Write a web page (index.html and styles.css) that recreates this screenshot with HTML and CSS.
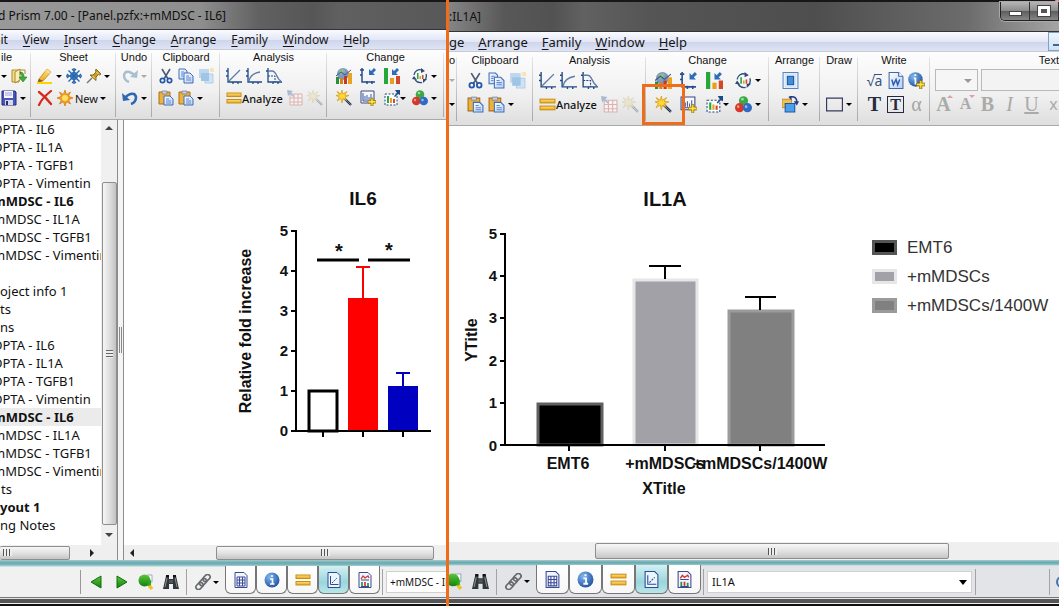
FILE: index.html
```
<!DOCTYPE html>
<html lang="en">
<head>
<meta charset="utf-8">
<title>Prism 7.00</title>
<link rel="stylesheet" href="styles.css">
</head>
<body>
<svg class="sprite" aria-hidden="true">
  <defs>
    <linearGradient id="gold" x1="0" y1="0" x2="0" y2="1"><stop offset="0" stop-color="#ffe27a"/><stop offset="1" stop-color="#e9a51c"/></linearGradient>
    <linearGradient id="page" x1="0" y1="0" x2="1" y2="1"><stop offset="0" stop-color="#fff"/><stop offset="1" stop-color="#b9cdf0"/></linearGradient>
    <radialGradient id="ball" cx=".35" cy=".3" r=".8"><stop offset="0" stop-color="#7fb6ee"/><stop offset="1" stop-color="#1a4c9c"/></radialGradient>
    <linearGradient id="green" x1="0" y1="0" x2="0" y2="1"><stop offset="0" stop-color="#5fc63b"/><stop offset="1" stop-color="#12820f"/></linearGradient>
  </defs>
  <symbol id="open" viewBox="0 0 16 16"><path d="M1 2h7v12H1z" fill="#f3dc8b" stroke="#b08a2a"/><path d="M4 4l5-3v11l-5 3z" fill="#fbeebb" stroke="#b08a2a"/><path d="M9 2h5v4" fill="none" stroke="#b08a2a"/><path d="M9 4c3 0 4 2 4 5h3l-4 5-4-5h3c0-2-1-3-2-3z" fill="#3fae3a" stroke="#1d7a1c" stroke-width=".6"/></symbol>
  <symbol id="save" viewBox="0 0 16 16"><path d="M1 1h13l1 1v13H1z" fill="#4a55b8" stroke="#252d7a"/><path d="M3 1h9v7H3z" fill="#f4f5fd"/><path d="M4 3h7M4 5h7" stroke="#9aa0d8"/><path d="M4 10h8v5H4z" fill="#d7d9e8"/><path d="M5 11h2v4H5z" fill="#252d7a"/></symbol>
  <symbol id="pencil" viewBox="0 0 16 16"><path d="M2 11L10 1l4 3-8 9-5 1z" fill="url(#gold)" stroke="#b88718" stroke-width=".8"/><path d="M2 11l4 2-5 1z" fill="#7a5a2a"/><path d="M10 1l4 3-2 2-4-3z" fill="#f7dc86"/><path d="M0 14h15v2H0z" fill="#ffd200"/></symbol>
  <symbol id="snow" viewBox="0 0 16 16"><g stroke="#2867b0" stroke-width="1.4" fill="none"><path d="M8 0v16M0 8h16M2.500 2.500l11 11M13.500 2.500l-11 11"/><path d="M6 1l2 2 2-2M6 15l2-2 2 2M1 6l2 2-2 2M15 6l-2 2 2 2"/><circle cx="8" cy="8" r="3.200"/></g></symbol>
  <symbol id="pin" viewBox="0 0 16 16"><path d="M6 10l-5 5" stroke="#777" stroke-width="1.500"/><path d="M10 1l5 5-1.500 1-1-.5-2.500 2.500v3.500L4 7h3l3-3-.5-1.500z" fill="#c79c22" stroke="#7d6210" stroke-width=".9"/><path d="M10.500 4l2 2M6.500 8l2.500 2.500" stroke="#f9e493"/></symbol>
  <symbol id="cross" viewBox="0 0 16 16"><path d="M2 2c4 3 9 8 12 12M14 1C9 5 4 10 2 15" stroke="#d8271c" stroke-width="2.200" fill="none" stroke-linecap="round"/></symbol>
  <symbol id="star" viewBox="0 0 16 16"><path d="M8 0l1.600 4.500L13.500 2l-2 4.300L16 8l-4.500 1.700 2 4.300-3.900-2.300L8 16l-1.600-4.300L2.500 14l2-4.300L0 8l4.500-1.700-2-4.300 3.900 2.500z" fill="#f6a21b" stroke="#cf7410" stroke-width=".7"/><circle cx="8" cy="8" r="3" fill="#ffe067"/></symbol>
  <symbol id="undo" viewBox="0 0 16 16"><path d="M3 8c4-5 10-6 11-1 0 3-2 6-5 7" fill="none" stroke="#2c68b4" stroke-width="2.600"/><path d="M0 3l1 8 7-1z" fill="#2c68b4"/></symbol>
  <symbol id="redo" viewBox="0 0 16 16"><path d="M13 8C9 3 3 2 2 7c0 3 2 6 5 7" fill="none" stroke="#a9bfd0" stroke-width="2.400"/><path d="M16 2l-1 8-7-1z" fill="#a9bfd0"/></symbol>
  <symbol id="cut" viewBox="0 0 16 16"><path d="M4 1l6 10M12 1L6 11" stroke="#4a5a78" stroke-width="1.600"/><circle cx="4.500" cy="12.500" r="2.200" fill="none" stroke="#2458a8" stroke-width="1.700"/><circle cx="11.500" cy="12.500" r="2.200" fill="none" stroke="#2458a8" stroke-width="1.700"/></symbol>
  <symbol id="copy" viewBox="0 0 16 16"><path d="M1 1h6l2 2v8H1z" fill="url(#page)" stroke="#3f6fbd"/><path d="M6 5h6l3 3v7H6z" fill="url(#page)" stroke="#3f6fbd"/><path d="M8 8h3M8 10h5M8 12h5M3 4h3M3 6h2M3 8h2" stroke="#5d8ad0"/></symbol>
  <symbol id="dup" viewBox="0 0 16 16"><g opacity=".75"><path d="M1 1h10v9H1z" fill="#a9cdec"/><path d="M7 6h8v9H7z" fill="#c5def2" stroke="#9cc3e4"/><path d="M3 5h8v8H3z" fill="#84b5e0"/><path d="M12 0h4v4h-4z" fill="#f7e1a2"/></g></symbol>
  <symbol id="paste" viewBox="0 0 16 16"><path d="M1 2h11v12H1z" fill="#eeb13c" stroke="#a8701a"/><path d="M4 1h5v3H4z" fill="#c8cddb" stroke="#7a8092" stroke-width=".7"/><path d="M6 6h6l3 3v6H6z" fill="url(#page)" stroke="#3f6fbd"/><path d="M8 9h3M8 11h5M8 13h5" stroke="#5d8ad0"/></symbol>
  <symbol id="line" viewBox="0 0 16 16"><path d="M2 0v14h14M0 3h2M0 8h2M7 14v2M12 14v2" fill="none" stroke="#1f4a86" stroke-width="1.300"/><path d="M3 13L14 2" stroke="#5b7ca8" stroke-width="1.300"/></symbol>
  <symbol id="curve" viewBox="0 0 16 16"><path d="M2 0v14h14M0 3h2M0 8h2M7 14v2M12 14v2" fill="none" stroke="#1f4a86" stroke-width="1.300"/><path d="M3 13c1-5 5-8 11-9" fill="none" stroke="#5b7ca8" stroke-width="1.300"/></symbol>
  <symbol id="decay" viewBox="0 0 16 16"><path d="M2 0v14h14M0 3h2M7 14v2M12 14v2" fill="none" stroke="#1f4a86" stroke-width="1.300"/><path d="M2 3h4c5 0 4 8 9 10" fill="none" stroke="#5b7ca8" stroke-width="1.300"/><path d="M2 8h7v6" fill="none" stroke="#1f4a86" stroke-dasharray="2 1"/></symbol>
  <symbol id="bars" viewBox="0 0 16 16"><rect x="1" y="3" width="14" height="3.500" fill="url(#gold)" stroke="#c98e15"/><rect x="1" y="9.500" width="14" height="3.500" fill="url(#gold)" stroke="#c98e15"/></symbol>
  <symbol id="dimtable" viewBox="0 0 16 16"><path d="M3 4h12v11H3zM3 8h12M3 12h12M7 4v11M11 4v11" fill="#faf1f1" stroke="#d9b2b2"/><path d="M0 0l6 1-2 2 3 3-1 1-3-3-2 2z" fill="#a9b9d2"/></symbol>
  <symbol id="wand" viewBox="0 0 16 16"><path d="M8 8l7 7" stroke="#27364f" stroke-width="2.400"/><path d="M9 9l6 6" stroke="#6c86ad" stroke-width=".8"/><path d="M6 0l.8 4L11 1.500 8.500 5l4.500.5-4 1.500 1.500 3.500L7 8.500 6 13 5 8.500 1 11l2.300-4L0 5.500 3.500 5 1 1.500 5 4z" fill="#ffd834" stroke="#d39a16" stroke-width=".7"/></symbol>
  <symbol id="globe" viewBox="0 0 16 16"><circle cx="7" cy="6" r="6" fill="#7d97c4"/><path d="M3 3c3-3 6-2 6 0s-3 1-3 3-3 1-3-3z" fill="#8dbb90"/><path d="M0 9h3v7H0z" fill="#2a8f3c"/><path d="M4 10h3v6H4z" fill="#d9821c"/><path d="M8 8h3v8H8z" fill="#c33a22"/><path d="M12 5h4v11h-4z" fill="#e8a224"/><path d="M0 8l5-4 4 3 6-5" stroke="#41587c" fill="none"/></symbol>
  <symbol id="axes" viewBox="0 0 16 16"><path d="M2 0v14h13M0 2h4M0 7h2M7 13v3M12 13v3" fill="none" stroke="#234f8d" stroke-width="1.500"/><path d="M9 1v6h6l-2-2 3-3-2-2-3 3z" fill="#2f6dbb"/></symbol>
  <symbol id="barchg" viewBox="0 0 16 16"><path d="M0 0h4v16H0z" fill="#27a63a"/><path d="M6 10h4v6H6z" fill="#e89f1d"/><path d="M12 8h4v8h-4z" fill="#d3472a"/><path d="M8 1v6h6l-2-2 3-3-2-2-3 3z" fill="#2f6dbb"/></symbol>
  <symbol id="cycle" viewBox="0 0 16 16"><path d="M2 7a6 6 0 0 1 8-5M14 6a6.500 6.500 0 0 1-2 7M10 14.500a6.500 6.500 0 0 1-7-3" fill="none" stroke="#2c4b78" stroke-width="1.300"/><path d="M9 0l4 3-4 2zM15 11l-4 4v-4zM0 11l2-3 3 4z" fill="#2c4b78"/><path d="M5 5h1.500v6H5z" fill="#27a63a"/><path d="M7.500 8H9v3H7.500z" fill="#e89f1d"/><path d="M10 7h1.500v4H10z" fill="#d3472a"/></symbol>
  <symbol id="graphadd" viewBox="0 0 16 16"><path d="M1 1h13v12H1z" fill="#f6f8fe" stroke="#3a4a7c"/><path d="M3 3v8h10" fill="none" stroke="#2e4a8c"/><path d="M5 10V6M7 10V5M9 10V7M11 10V4" stroke="#3c5fa8"/><path d="M11 8h2v2.500h3v2.500h-3v3h-2v-3H8v-2.500h3z" fill="#ffe23a" stroke="#a07c10" stroke-width=".8"/></symbol>
  <symbol id="resize" viewBox="0 0 16 16"><path d="M1 4h12v11H1z" fill="#fff" stroke="#1f4a86" stroke-dasharray="2 1.500"/><path d="M3 6h2v7H3z" fill="#27a63a"/><path d="M6 8h2v5H6z" fill="#e89f1d"/><path d="M9 9h2v4H9z" fill="#d3472a"/><path d="M11 0h5v5l-2-1-3 3-1-1 3-3z" fill="#1f4a86"/></symbol>
  <symbol id="rgb" viewBox="0 0 16 16"><circle cx="8" cy="4.500" r="4.300" fill="#39a845"/><circle cx="4.300" cy="11" r="4.300" fill="#d9362a"/><circle cx="11.700" cy="11" r="4.300" fill="#2e6ac4"/><circle cx="7" cy="3" r="1.300" fill="#9fdb9f"/><circle cx="3" cy="10" r="1.200" fill="#f19a8e"/><circle cx="10.500" cy="10" r="1.200" fill="#9cc1f0"/></symbol>
  <symbol id="center" viewBox="0 0 16 16"><path d="M1 0.500h14v15H1z" fill="#f7fbff" stroke="#4f86c6"/><path d="M3 2h10v12H3z" fill="none" stroke="#c8def4"/><path d="M5 4h6v8H5z" fill="#3f8fdc" stroke="#1c4d8f"/></symbol>
  <symbol id="order" viewBox="0 0 16 16"><path d="M0 3h9v8H0z" fill="#f2c14c" stroke="#b0801c" stroke-width=".7"/><path d="M3 7h9v8H3z" fill="#4aa0ee" stroke="#1d56a0"/><path d="M7 1c5-1 7 1 7 5" fill="none" stroke="#233a86" stroke-width="1.500"/><path d="M11 5h5l-2 4zM9 0L6 1l3 3z" fill="#233a86"/></symbol>
  <symbol id="rect" viewBox="0 0 16 16"><path d="M.5 2h15v12H.5z" fill="none" stroke="#343c5c" stroke-width="1.200"/></symbol>
  <symbol id="word" viewBox="0 0 16 16"><path d="M2 .5h9l4 4v11H2z" fill="url(#page)" stroke="#3d69b4"/><path d="M11 0v4h4" fill="#fff" stroke="#3d69b4"/><path d="M4.500 7l1.500 5 2.500-5 1.500 5 2-5" fill="none" stroke="#2b5fb4" stroke-width="1.400"/></symbol>
  <symbol id="infoadd" viewBox="0 0 16 16"><circle cx="7" cy="7" r="6.800" fill="url(#ball)"/><path d="M5.500 6H7v5h1.500M6 3h1.800" stroke="#fff" stroke-width="1.600" fill="none"/><path d="M11 8h2v2.500h3v2.500h-3v3h-2v-3H8v-2.500h3z" fill="#ffe23a" stroke="#8a6c10" stroke-width=".8"/></symbol>
  <symbol id="prev" viewBox="0 0 16 16"><path d="M13 2v12L3 8z" fill="url(#green)" stroke="#0f6f0d"/></symbol>
  <symbol id="next" viewBox="0 0 16 16"><path d="M4 2v12l10-6z" fill="url(#green)" stroke="#0f6f0d"/></symbol>
  <symbol id="find" viewBox="0 0 16 16"><path d="M10 10l4 5" stroke="#edc32d" stroke-width="3.400"/><path d="M9 1h5v7H9z" fill="#fff" stroke="#9ab"/><circle cx="6.500" cy="6.500" r="6" fill="url(#green)"/><path d="M10 7l3-1v5l-3 1z" fill="#2fa51f"/></symbol>
  <symbol id="binoc" viewBox="0 0 16 16"><path d="M3 2h3v3h4V2h3l3 13h-6v-5H6v5H0z" fill="#30363a"/><path d="M4 4L2 13M12 4l2 9" stroke="#869097"/><path d="M3 1h3v2H3zM10 1h3v2h-3z" fill="#111"/><path d="M6 6h4v3H6z" fill="#555"/></symbol>
  <symbol id="chain" viewBox="0 0 16 16"><g fill="none" stroke="#65696d" stroke-width="1.600"><rect x="7.500" y="1.500" width="8" height="5" rx="2.500" transform="rotate(-45 11.500 4)"/><rect x="4" y="5.500" width="8" height="5" rx="2.500" transform="rotate(-45 8 8)"/><rect x="0.500" y="9.500" width="8" height="5" rx="2.500" transform="rotate(-45 4.500 12)"/></g></symbol>
  <symbol id="sheet" viewBox="0 0 16 16"><path d="M2 .5h9l3 3v12H2z" fill="#f3f6ff" stroke="#3a4a94"/><path d="M4 5h8v9H4zM4 8h8M4 11h8M6.500 5v9M9.500 5v9" fill="none" stroke="#3a4a94"/></symbol>
  <symbol id="info" viewBox="0 0 16 16"><circle cx="8" cy="8" r="7.500" fill="url(#ball)"/><path d="M6 7h2.500v5H10M6 12h4.500M7 4h2" stroke="#fff" stroke-width="1.700" fill="none"/></symbol>
  <symbol id="graph" viewBox="0 0 16 16"><path d="M2 .5h9l3 3v12H2z" fill="#eaf6ff" stroke="#2e4a94"/><path d="M4.500 4v8.500h8" fill="none" stroke="#2e4a94"/><path d="M6 11l5-5" stroke="#2e4a94" stroke-dasharray="2 1"/></symbol>
  <symbol id="layout" viewBox="0 0 16 16"><path d="M2 .5h9l3 3v12H2z" fill="#f3f6ff" stroke="#3a4a94"/><path d="M4 7l2-3 2 2 3-2 1 2" stroke="#d3372a" fill="none" stroke-width="1.300"/><path d="M4 8h8M4 14.500h8" stroke="#3a4a94"/><path d="M5 10v4M11 11v3" stroke="#27963a" stroke-width="1.700"/><path d="M8 10v4" stroke="#d3372a" stroke-width="1.700"/></symbol>
</svg>

<main class="screens">
  <section class="pane pane-left">
    <header class="titlebar"><span class="title title-cut">d Prism 7.00 - [Panel.pzfx:+mMDSC - IL6]</span></header>
    <nav class="menu menu-cut-edit">
      <a href="#">dit</a><a href="#"><u>V</u>iew</a><a href="#"><u>I</u>nsert</a><a href="#"><u>C</u>hange</a><a href="#"><u>A</u>rrange</a><a href="#"><u>F</u>amily</a><a href="#"><u>W</u>indow</a><a href="#"><u>H</u>elp</a>
    </nav>
    <div class="ribbon">
      <div class="group g-file">
        <h2>ile</h2>
        <div class="row"><button class="tool" aria-label="New file"><i class="drop"></i></button><button class="tool" aria-label="Open"><svg><use href="#open"/></svg></button></div>
        <div class="row"><button class="tool" aria-label="Save"><svg><use href="#save"/></svg><i class="drop"></i></button></div>
      </div>
      <div class="group g-sheet">
        <h2>Sheet</h2>
        <div class="row"><button class="tool" aria-label="Highlight"><svg><use href="#pencil"/></svg><i class="drop"></i></button><button class="tool" aria-label="Freeze"><svg><use href="#snow"/></svg></button><button class="tool" aria-label="Pin"><svg><use href="#pin"/></svg><i class="drop"></i></button></div>
        <div class="row"><button class="tool" aria-label="Delete"><svg><use href="#cross"/></svg></button><button class="tool"><svg><use href="#star"/></svg>New<i class="drop"></i></button></div>
      </div>
      <div class="group g-undo">
        <h2>Undo</h2>
        <div class="row"><button class="tool" aria-label="Redo" disabled><svg><use href="#redo"/></svg><i class="drop dim"></i></button></div>
        <div class="row"><button class="tool" aria-label="Undo"><svg><use href="#undo"/></svg><i class="drop"></i></button></div>
      </div>
      <div class="group g-clip">
        <h2>Clipboard</h2>
        <div class="row"><button class="tool" aria-label="Cut"><svg><use href="#cut"/></svg></button><button class="tool" aria-label="Copy"><svg><use href="#copy"/></svg></button><button class="tool" aria-label="Duplicate" disabled><svg><use href="#dup"/></svg></button></div>
        <div class="row"><button class="tool" aria-label="Paste"><svg><use href="#paste"/></svg></button><button class="tool" aria-label="Paste special"><svg><use href="#paste"/></svg><i class="drop"></i></button></div>
      </div>
      <div class="group g-analysis">
        <h2>Analysis</h2>
        <div class="row"><button class="tool" aria-label="Linear fit"><svg><use href="#line"/></svg></button><button class="tool" aria-label="Curve fit"><svg><use href="#curve"/></svg></button><button class="tool" aria-label="Interpolate"><svg><use href="#decay"/></svg></button></div>
        <div class="row"><button class="tool analyze"><svg><use href="#bars"/></svg>Analyze</button><button class="tool" aria-label="Table" disabled><svg><use href="#dimtable"/></svg></button><button class="tool" aria-label="Wizard" disabled><svg class="faded"><use href="#wand"/></svg></button></div>
      </div>
      <div class="group g-change">
        <h2>Change</h2>
        <div class="row"><button class="tool" aria-label="Graph type"><svg><use href="#globe"/></svg></button><button class="tool" aria-label="Axes"><svg><use href="#axes"/></svg></button><button class="tool" aria-label="Data sets"><svg><use href="#barchg"/></svg></button><button class="tool" aria-label="Rotate"><svg><use href="#cycle"/></svg><i class="drop"></i></button></div>
        <div class="row"><button class="tool" aria-label="Magic"><svg><use href="#wand"/></svg></button><button class="tool" aria-label="Add data"><svg><use href="#graphadd"/></svg></button><button class="tool tight" aria-label="Resize"><svg><use href="#resize"/></svg><i class="drop"></i></button><button class="tool" aria-label="Colors"><svg><use href="#rgb"/></svg><i class="drop"></i></button></div>
      </div>
    </div>

    <div class="work">
      <aside class="navigator">
        <div class="nav-main">
          <ul class="tree">
            <li class="cut">DPTA - IL6</li><li class="cut">DPTA - IL1A</li><li class="cut">DPTA - TGFB1</li><li class="cut">DPTA - Vimentin</li>
            <li class="cut bold">mMDSC - IL6</li><li class="cut">mMDSC - IL1A</li><li class="cut">mMDSC - TGFB1</li><li class="cut">mMDSC - Vimentin</li>
            <li></li><li>oject info 1</li><li>ts</li><li>ns</li>
            <li class="cut">DPTA - IL6</li><li class="cut">DPTA - IL1A</li><li class="cut">DPTA - TGFB1</li><li class="cut">DPTA - Vimentin</li>
            <li class="cut bold current">mMDSC - IL6</li><li class="cut">mMDSC - IL1A</li><li class="cut">mMDSC - TGFB1</li><li class="cut">mMDSC - Vimentin</li>
            <li class="sub">ts</li><li class="bold">yout 1</li><li>ng Notes</li>
          </ul>
          <div class="vscroll"><i class="arrow up"></i><div class="vthumb"><i class="grip-v"></i></div><i class="arrow down"></i></div>
        </div>
        <div class="hscroll nav-h"><div class="hthumb"><i class="grip"></i></div><i class="arrow right"></i></div>
      </aside>
      <div class="splitter"><i></i></div>
      <div class="document">
        <div class="canvas">
          <svg class="chart chart-il6" viewBox="230 180 216 270" role="img" aria-label="IL6 bar chart">
            <text class="t-title" x="363" y="205">IL6</text>
            <text class="t-axis" transform="translate(251 331) rotate(-90)">Relative fold increase</text>
            <g class="t-num"><text x="288" y="236">5</text><text x="288" y="276">4</text><text x="288" y="316">3</text><text x="288" y="356">2</text><text x="288" y="396">1</text><text x="288" y="436">0</text></g>
            <rect x="309" y="391" width="28" height="40" fill="#fff" stroke="#000" stroke-width="3"/>
            <rect x="348" y="298" width="30" height="133" fill="#f00"/>
            <rect x="388" y="386" width="30" height="45" fill="#0000c0"/>
            <path d="M363 298V267M356 267h14" stroke="#f00" stroke-width="2"/>
            <path d="M403 386V373M396 373h14" stroke="#0000c0" stroke-width="2"/>
            <path d="M317 260h42M368 260h42" stroke="#000" stroke-width="3"/>
            <path d="M296 230V431M291 231h5M291 271h5M291 311h5M291 351h5M291 391h5M291 431h140M323 431v6M363 431v6M403 431v6" stroke="#000" stroke-width="2" fill="none"/>
            <text class="t-star" x="339" y="258">*</text><text class="t-star" x="389" y="257">*</text>
          </svg>
        </div>
        <div class="hscroll doc-h"><i class="arrow left"></i><div class="hthumb"><i class="grip"></i></div></div>
      </div>
    </div>

    <div class="teal"></div>
    <footer class="status">
      <div class="spacer"></div>
      <button class="tool" aria-label="Previous"><svg><use href="#prev"/></svg></button>
      <button class="tool" aria-label="Next"><svg><use href="#next"/></svg></button>
      <button class="tool" aria-label="Find"><svg><use href="#find"/></svg></button>
      <button class="tool" aria-label="Search"><svg><use href="#binoc"/></svg></button>
      <i class="sep"></i>
      <button class="tool link" aria-label="Link"><svg><use href="#chain"/></svg><i class="drop"></i></button>
      <div class="tabs">
        <button aria-label="Data"><svg><use href="#sheet"/></svg></button><button aria-label="Info"><svg><use href="#info"/></svg></button><button aria-label="Results"><svg><use href="#bars"/></svg></button><button class="on" aria-label="Graphs"><svg><use href="#graph"/></svg></button><button aria-label="Layouts"><svg><use href="#layout"/></svg></button>
      </div>
      <i class="sep"></i>
      <label class="picker"><select aria-label="Sheet"><option>+mMDSC - IL6</option></select></label>
    </footer>
    <div class="frame-bottom"></div>
  </section>

  <div class="divider"></div>

  <section class="pane pane-right">
    <header class="titlebar">
      <span class="title">:IL1A]</span>
      <div class="winbtns"><button aria-label="Minimize"><i class="min"></i></button><button aria-label="Maximize"><i class="max"></i></button></div>
    </header>
    <nav class="menu">
      <a href="#">ge</a><a href="#"><u>A</u>rrange</a><a href="#"><u>F</u>amily</a><a href="#"><u>W</u>indow</a><a href="#"><u>H</u>elp</a>
      <button class="mdi" aria-label="Minimize sheet"></button>
    </nav>
    <div class="ribbon">
      <div class="group g-undo">
        <h2>o</h2>
        <div class="row"><i class="drop dim"></i></div>
        <div class="row"><i class="drop"></i></div>
      </div>
      <div class="group g-clip">
        <h2>Clipboard</h2>
        <div class="row"><button class="tool" aria-label="Cut"><svg><use href="#cut"/></svg></button><button class="tool" aria-label="Copy"><svg><use href="#copy"/></svg></button><button class="tool" aria-label="Duplicate" disabled><svg><use href="#dup"/></svg></button></div>
        <div class="row"><button class="tool" aria-label="Paste"><svg><use href="#paste"/></svg></button><button class="tool" aria-label="Paste special"><svg><use href="#paste"/></svg><i class="drop"></i></button></div>
      </div>
      <div class="group g-analysis">
        <h2>Analysis</h2>
        <div class="row"><button class="tool" aria-label="Linear fit"><svg><use href="#line"/></svg></button><button class="tool" aria-label="Curve fit"><svg><use href="#curve"/></svg></button><button class="tool" aria-label="Interpolate"><svg><use href="#decay"/></svg></button></div>
        <div class="row"><button class="tool analyze"><svg><use href="#bars"/></svg>Analyze</button><button class="tool" aria-label="Table" disabled><svg><use href="#dimtable"/></svg></button><button class="tool" aria-label="Wizard" disabled><svg class="faded"><use href="#wand"/></svg></button></div>
      </div>
      <div class="group g-change">
        <h2>Change</h2>
        <div class="row"><button class="tool" aria-label="Graph type"><svg><use href="#globe"/></svg></button><button class="tool" aria-label="Axes"><svg><use href="#axes"/></svg></button><button class="tool" aria-label="Data sets"><svg><use href="#barchg"/></svg></button><button class="tool" aria-label="Rotate"><svg><use href="#cycle"/></svg><i class="drop"></i></button></div>
        <div class="row"><button class="tool marked" aria-label="Magic"><svg><use href="#wand"/></svg></button><button class="tool" aria-label="Add data"><svg><use href="#graphadd"/></svg></button><button class="tool tight" aria-label="Resize"><svg><use href="#resize"/></svg><i class="drop"></i></button><button class="tool" aria-label="Colors"><svg><use href="#rgb"/></svg><i class="drop"></i></button></div>
      </div>
      <div class="group g-arrange">
        <h2>Arrange</h2>
        <div class="row"><button class="tool" aria-label="Center"><svg><use href="#center"/></svg></button></div>
        <div class="row"><button class="tool" aria-label="Order"><svg><use href="#order"/></svg><i class="drop"></i></button></div>
      </div>
      <div class="group g-draw">
        <h2>Draw</h2>
        <div class="row"></div>
        <div class="row"><button class="tool" aria-label="Rectangle"><svg><use href="#rect"/></svg><i class="drop"></i></button></div>
      </div>
      <div class="group g-write">
        <h2>Write</h2>
        <div class="row"><button class="tool glyph root">√<span>a</span></button><button class="tool" aria-label="Word"><svg><use href="#word"/></svg></button><button class="tool" aria-label="Info"><svg><use href="#infoadd"/></svg></button></div>
        <div class="row"><button class="tool glyph serif">T</button><button class="tool glyph serif boxed">T</button><button class="tool glyph serif gray">α</button></div>
      </div>
      <div class="group g-text">
        <h2>Text</h2>
        <div class="row"><span class="sizebox"><select aria-label="Font size" disabled><option></option></select></span><input aria-label="Font name" disabled></div>
        <div class="row letters"><button class="tool glyph up">A</button><button class="tool glyph down">A</button><button class="tool glyph b">B</button><button class="tool glyph it">I</button><button class="tool glyph un">U</button><button class="tool glyph x">x</button></div>
      </div>
    </div>

    <div class="canvas">
      <svg class="chart chart-il1a" viewBox="460 180 380 325" role="img" aria-label="IL1A bar chart">
        <text class="t-title big" x="665" y="206">IL1A</text>
        <text class="t-axis" transform="translate(477 340) rotate(-90)">YTitle</text>
        <g class="t-num"><text x="497" y="239">5</text><text x="497" y="281">4</text><text x="497" y="323">3</text><text x="497" y="366">2</text><text x="497" y="408">1</text><text x="497" y="451">0</text></g>
        <rect x="538" y="404" width="64" height="41" fill="#000" stroke="#606060" stroke-width="3"/>
        <rect x="634" y="280" width="63" height="165" fill="#a2a1a7" stroke="#e6e6e6" stroke-width="3"/>
        <rect x="729" y="311" width="64" height="134" fill="#808080" stroke="#9b9b9b" stroke-width="3"/>
        <path d="M665 279V266M649 266h32M760 310V297M745 297h31" stroke="#000" stroke-width="2"/>
        <path d="M505 233V445M500 234h5M500 276h5M500 318h5M500 361h5M500 403h5M500 445h325M569 445v6M665 445v6M760 445v6" stroke="#000" stroke-width="2" fill="none"/>
        <g class="t-axis"><text x="568" y="469">EMT6</text><text x="665" y="469">+mMDSCs</text><text x="760" y="469">+mMDSCs/1400W</text><text x="664" y="494">XTitle</text></g>
      </svg>
      <ul class="legend">
        <li><i class="sw black"></i>EMT6</li>
        <li><i class="sw light"></i>+mMDSCs</li>
        <li><i class="sw mid"></i>+mMDSCs/1400W</li>
      </ul>
    </div>
    <div class="hscroll doc-h"><div class="hthumb"><i class="grip"></i></div></div>

    <div class="teal"></div>
    <footer class="status">
      <button class="tool cutfind" aria-label="Find"><svg><use href="#find"/></svg></button>
      <button class="tool" aria-label="Search"><svg><use href="#binoc"/></svg></button>
      <i class="sep"></i>
      <button class="tool link" aria-label="Link"><svg><use href="#chain"/></svg><i class="drop"></i></button>
      <div class="tabs">
        <button aria-label="Data"><svg><use href="#sheet"/></svg></button><button aria-label="Info"><svg><use href="#info"/></svg></button><button aria-label="Results"><svg><use href="#bars"/></svg></button><button class="on" aria-label="Graphs"><svg><use href="#graph"/></svg></button><button aria-label="Layouts"><svg><use href="#layout"/></svg></button>
      </div>
      <i class="sep"></i>
      <label class="picker"><select aria-label="Sheet"><option>IL1A</option></select><i class="drop"></i></label>
      <i class="sep"></i>
      <div class="tail"><i class="sep"></i><i class="ring"></i></div>
    </footer>
    <div class="frame-bottom"></div>
  </section>
</main>
</body>
</html>
```
FILE: styles.css
```
* { box-sizing: border-box; }
body { margin: 0; font-family: "Noto Sans", "Open Sans", sans-serif; font-size: 12px; color: #111; background: #fff; }
button, select, input { font: inherit; color: inherit; margin: 0; padding: 0; border: 0; background: none; }
ul { list-style: none; margin: 0; padding: 0; }
i { display: block; flex: none; }
.sprite { position: absolute; width: 0; height: 0; }

.screens { display: grid; grid-template-columns: 446fr 3px 610fr; min-height: 100vh; overflow: hidden; }
.divider { background: #ee6c1a; }
.pane { display: flex; flex-direction: column; min-width: 0; overflow: hidden; --icon: 16px; }
.pane-right { --icon: 17px; }

/* Title bar and menu */
.titlebar { display: flex; align-items: center; justify-content: space-between; height: 30px; border-top: 2px solid #191519; border-bottom: 1px solid #333; color: #111; white-space: nowrap; }
.pane-left .titlebar { background: linear-gradient(90deg, #999 0, #8e8e8e 45%, #616161 58%, #565656 70%, #606060 76%, #585858 100%); }
.pane-right .titlebar { height: 32px; background: linear-gradient(90deg, #858585 0, #585858 9%, #525252 17%, #616161 22%, #555 33%, #4e4e4e 60%, #6c6c6c 85%, #a5a5a5 100%); }
.title-cut { margin-left: -2px; }
.winbtns { display: flex; align-self: flex-start; border: 1px solid #222; border-top: 0; border-right: 0; border-radius: 0 0 0 5px; overflow: hidden; box-shadow: 0 0 0 1px #aaa; }
.winbtns button { display: grid; place-items: center; width: 29px; height: 18px; border-right: 1px solid #333; background: linear-gradient(#b5b5b5, #8c8c8c 48%, #5e5e5e 52%, #868686); }
.min { width: 13px; height: 5px; margin-top: 4px; border: 1px solid #444; background: #fff; }
.max { width: 12px; height: 10px; border: 3px solid #fff; outline: 1px solid #444; background: #555; }

.menu { display: flex; align-items: center; gap: 15px; height: 20px; background: linear-gradient(#fafbff, #e3e7f6 50%, #cfd6ec 55%, #dfe4f4); border-bottom: 1px solid #c8cbd6; }
.menu a { color: #151515; text-decoration: none; line-height: 18px; }
.menu u { text-underline-offset: 2px; }
.menu-cut-edit { padding-left: 0; text-indent: 0; }
.menu-cut-edit a:first-child { margin-left: -7px; }
.pane-right .menu { height: 20px; gap: 14px; font-size: 13px; }
.mdi { align-self: stretch; width: 11px; margin-left: auto; border: 1px solid #7ea2c4; border-right: 0; background: linear-gradient(#eef6fd, #cfe2f2); }
.mdi::after { content: ""; display: block; height: 2px; margin: 7px 0 0 4px; background: #3f6792; }

/* Ribbon */
.ribbon { display: flex; height: 70px; background: linear-gradient(#fdfdfd, #f0f0f0 60%, #dedede); border-bottom: 1px solid #a9a9a9; }
.pane-right .ribbon { height: 74px; }
.group { flex: none; padding-left: 6px; background: linear-gradient(#e6e6e6, #a8a8a8) right / 1px 64px no-repeat; }
.group h2 { margin: 0 0 0 -6px; height: 15px; font: 11px/15px "Liberation Sans", Arial, sans-serif; text-align: center; white-space: nowrap; }
.pane-right .group h2 { height: 16px; line-height: 16px; }
.row { display: flex; align-items: center; gap: 4px; height: 22px; }
.pane-right .row { height: 24px; }
.tool { display: flex; align-items: center; gap: 3px; flex: none; font-size: 11px; position: relative; }
.tool svg, .tabs svg { display: block; width: var(--icon); height: var(--icon); flex: none; }
.tool .faded { opacity: .3; filter: grayscale(.5); }
.tool.tight, .tool.analyze { gap: 0; }
.analyze { font-weight: 500; }
.drop { width: 0; height: 0; border: 3px solid transparent; border-top-color: #000; border-bottom: 0; }
.drop.dim { border-top-color: #aaa; }
.g-file { width: 31px; padding-left: 1px; }
.g-file h2 { margin: 0; text-align: left; }
.g-sheet { width: 85px; }
.g-sheet .tool + .tool { gap: 2px; }
.g-undo { width: 36px; }
.g-clip { width: 68px; }
.g-analysis { width: 107px; }
.g-change { width: 117px; padding-left: 9px; }
.g-change h2 { margin-left: -9px; }
.g-change .row { display: grid; grid-template-columns: 24px 24px 28px 1fr; gap: 0; }
.pane-right .g-undo { width: 8px; padding-left: 0; }
.pane-right .g-undo h2 { margin: 0; text-align: left; }
.pane-right .g-clip { width: 76px; padding-left: 10px; }
.pane-right .g-clip h2 { margin-left: -10px; }
.pane-right .g-analysis { width: 113px; }
.pane-right .g-change { width: 123px; }
.pane-right .g-change .row { grid-template-columns: 25px 26px 29px 1fr; }
.marked::after { content: ""; position: absolute; inset: -12px -5px -12px -13px; border: 3px solid #ee6c1a; z-index: 2; }
.g-arrange { width: 51px; padding-left: 13px; }
.g-arrange h2 { margin-left: -13px; }
.g-draw { width: 38px; }
.g-write { width: 72px; padding-left: 8px; }
.g-write h2 { margin-left: -8px; }
.g-text { flex: 1; min-width: 0; padding-left: 5px; background: none; }
.g-text h2 { margin: 0; text-align: right; }
.g-text .row { gap: 3px; }
.glyph { justify-content: center; width: 17px; height: 17px; gap: 0; line-height: 17px; }
.root { font-size: 14px; color: #33557f; }
.root span { height: 12px; line-height: 11px; border-top: 1px solid #33557f; }
.serif { font: bold 20px/17px "Liberation Serif", serif; color: #222b40; }
.boxed { font-size: 16px; border: 1px solid #222b40; line-height: 15px; }
.gray { color: #a5a5a5; font-weight: 400; }
.sizebox { position: relative; flex: none; width: 43px; height: 22px; border: 1px solid #b9b9b9; background: #f6f6f6; }
.sizebox select { width: 100%; height: 100%; appearance: none; }
.sizebox::after { content: ""; position: absolute; right: 5px; top: 9px; border: 4px solid transparent; border-top-color: #999; border-bottom: 0; pointer-events: none; }
.g-text input { flex: 1; min-width: 0; height: 22px; border: 1px solid #b9b9b9; border-right: 0; background: #f3f3f3; }
.g-text .letters { gap: 5px; }
.letters .glyph { font: bold 20px/20px "Liberation Serif", serif; color: #aaa; }
.letters .down { font-size: 16px; }
.letters .it { font-style: italic; font-weight: 400; }
.letters .un { font-weight: 400; text-decoration: underline; }
.letters .x { font: 16px/17px "Noto Sans", sans-serif; }
.up::after, .down::after { content: ""; position: absolute; top: -1px; right: -1px; border: 3px solid transparent; }
.up::after { border-bottom-color: #dfa0a0; border-top: 0; }
.down::after { border-top-color: #dfa0a0; border-bottom: 0; }

/* Work area */
.work { display: flex; flex: 1; min-height: 0; }
.navigator { display: flex; flex-direction: column; width: 117px; flex: none; }
.nav-main { display: flex; flex: 1; min-height: 0; }
.tree { flex: 1; min-width: 0; overflow: hidden; white-space: nowrap; font-size: 13px; line-height: 18px; }
.tree li { height: 18px; }
.tree .cut { text-indent: -7px; }
.tree .sub { text-indent: 1px; }
.bold { font-weight: 700; }
.current { background: #ebebeb; }
.vscroll { display: flex; flex-direction: column; align-items: center; width: 16px; padding: 6px 0 8px; background: #f0f0f0; }
.vthumb { display: grid; place-items: center; width: 15px; flex: 1; margin: 52px 0 8px; border: 1px solid #8e8e8e; border-radius: 2px; background: linear-gradient(90deg, #f7f7f7, #dcdcdc 55%, #c2c2c2); }
.grip-v { width: 7px; height: 8px; background: repeating-linear-gradient(#666 0 1px, #eee 1px 3px); }
.grip { width: 9px; height: 7px; background: repeating-linear-gradient(90deg, #555 0 1px, #eee 1px 3px); }
.arrow { width: 0; height: 0; border: 4px solid transparent; }
.up.arrow { border-bottom-color: #444; border-top: 0; }
.down.arrow { border-top-color: #444; border-bottom: 0; }
.left.arrow { border-right-color: #222; border-left: 0; }
.right.arrow { border-left-color: #222; border-right: 0; }
.hscroll { display: flex; align-items: center; height: 15px; background: #efefef; }
.hthumb { display: grid; place-items: center; height: 14px; border: 1px solid #8e8e8e; border-radius: 2px; background: linear-gradient(#f7f7f7, #e2e2e2 50%, #c6c6c6); }
.nav-h .hthumb { width: 70px; margin-right: 20px; border-left: 0; }
.nav-h .grip { margin-right: 54px; }
.splitter { display: grid; align-items: center; width: 7px; flex: none; border: solid #8c8c8c; border-width: 0 1px; background: #f4f4f4; }
.splitter i { width: 3px; height: 26px; margin-left: 1px; border: solid #888; border-width: 0 1px; }
.document { display: flex; flex-direction: column; flex: 1; min-width: 0; }
.canvas { display: flex; flex: 1; background: #fff; overflow: hidden; }
.document .canvas { padding: 60px 0 0 33%; }
.document .hscroll { padding-left: 6px; }
.document .hthumb { width: 69%; margin-left: 26%; }
.pane-right .canvas { padding: 54px 0 0 11px; }
.pane-right .hscroll { height: 18px; }
.pane-right .hthumb { width: 58%; margin-left: 24%; height: 16px; }

/* Charts */
.chart { display: block; flex: none; font-family: "Liberation Sans", Arial, sans-serif; font-weight: 700; fill: #111; }
.chart-il6 { width: 216px; height: 270px; }
.chart-il1a { width: 380px; height: 325px; }
.t-title { font-size: 19px; text-anchor: middle; }
.t-title.big { font-size: 20px; }
.t-axis { font-size: 16px; text-anchor: middle; }
.t-num { font-size: 15px; text-anchor: end; }
.t-star { font-size: 20px; text-anchor: middle; }
.legend { padding: 53px 0 0 32px; font: 17px/29px "Liberation Sans", Arial, sans-serif; color: #333; white-space: nowrap; }
.legend li { display: flex; align-items: center; gap: 10px; }
.sw { width: 25px; height: 15px; border: 3px solid; }
.sw.black { background: #000; border-color: #555; }
.sw.light { background: #a2a1a7; border-color: #e6e6e6; }
.sw.mid { background: #808080; border-color: #9b9b9b; }

/* Bottom bar */
.teal { height: 7px; background: linear-gradient(#a5c9cc, #6aaab1 40%, #7db8bd 70%, #e0eeee); }
.status { display: flex; align-items: center; height: 30px; background: #f1f1f1; }
.status .spacer { width: 81px; align-self: center; height: 24px; border-right: 1px solid #999; margin-right: 7px; }
.status > .tool { margin-right: 9px; }
.status .tool + .sep { margin-left: -2px; }
.sep { width: 1px; height: 26px; background: #a3a3a3; }
.status .link { margin: 0 6px 0 8px; gap: 2px; }
.tabs { display: flex; align-self: flex-start; margin-top: -1px; }
.tabs button { display: grid; place-items: center; width: 31px; height: 28px; border: 1px solid #777; border-top: 0; border-radius: 0 0 6px 6px; background: linear-gradient(#fff, #f7f7f7); }
.tabs .on { background: linear-gradient(#d3f0f2, #9bd6dc 60%, #b9e6e9); }
.tabs + .sep { margin: 0 3px 0 2px; }
.picker { position: relative; flex: 1; min-width: 0; height: 22px; font-size: 11px; }
.picker select { display: block; width: 100%; height: 100%; padding-left: 4px; appearance: none; background: #fff; border: 1px solid #d0d0d0; border-radius: 0; }
.picker .drop { position: absolute; right: 5px; top: 9px; border-width: 5px 4px 0; pointer-events: none; }
.pane-left .picker { font-size: 10px; }
.pane-left .picker select { border-right: 0; padding-left: 3px; }
.pane-right .teal { height: 6px; }
.pane-right .status { background: #e3e4e8; height: 31px; }
.pane-right .tabs button { width: 33px; height: 29px; }
.status .cutfind { margin-left: -3px; }
.pane-right .picker + .sep { margin-left: 3px; }
.tail { display: flex; align-items: center; justify-content: flex-end; width: 83px; overflow: hidden; gap: 6px; }
.tail .ring { width: 12px; height: 12px; margin-right: -9px; border: 2px solid #3f74b4; border-radius: 6px; }
.frame-bottom { height: 9px; background: linear-gradient(#777 0 1px, #e4e4e4 1px 2px, #555 2px 6px, #eee 6px 7px, #111 7px); }
```
